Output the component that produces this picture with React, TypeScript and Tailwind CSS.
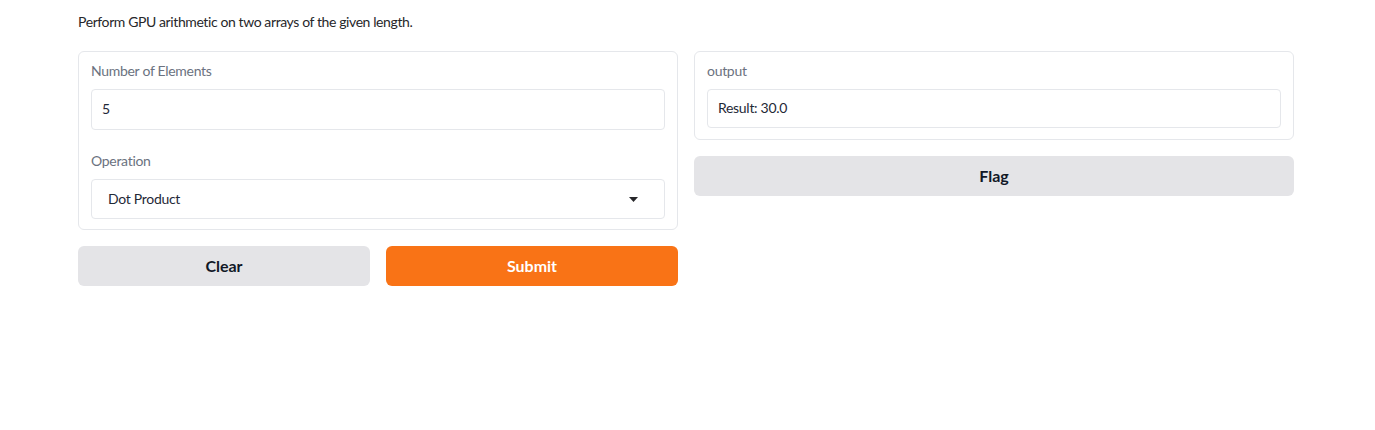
import React from 'react';

const font = { fontFamily: 'Lato, "Noto Sans", sans-serif' };

const Label = ({ children }: { children: React.ReactNode }) => (
  <div className="mb-2 h-[17px] text-[14px] leading-[14px] tracking-[-0.3px] text-[#6b7280]">{children}</div>
);

export default function App() {
  return (
    <div style={font} className="min-h-[430px] w-full bg-white text-[#1f2937]">
      <div className="mx-[78px] pt-[14px]">
        <p className="mb-[21px] text-[14px] leading-[16px] tracking-[-0.4px] text-[#27272a]">
          Perform GPU arithmetic on two arrays of the given length.
        </p>
        <div className="flex gap-4">
          {/* inputs */}
          <div className="flex w-[600px] flex-col gap-4">
            <div className="rounded-md border border-[#e5e7eb] px-3 pb-[10px] pt-3">
              <Label>Number of Elements</Label>
              <div className="flex h-[41px] items-center rounded border border-[#e5e7eb] px-[10px] pb-[3px] text-[14px] tracking-[-0.3px]">
                5
              </div>
              <div className="h-[24px]" />
              <Label>Operation</Label>
              <div className="flex h-[40px] items-center justify-between rounded border border-[#e5e7eb] pl-4 pr-[26px] text-[14px] tracking-[-0.3px]">
                <span className="pb-[2px]">Dot Product</span>
                <svg width="9" height="5" viewBox="0 0 9 5">
                  <path d="M0 0h9L4.5 5z" fill="#27272a" />
                </svg>
              </div>
            </div>
            <div className="flex gap-4">
              <button className="h-10 flex-1 rounded-md bg-[#e4e4e7] text-[16px] font-bold text-[#111827]">
                Clear
              </button>
              <button className="h-10 flex-1 rounded-md bg-[#f97316] text-[16px] font-bold text-white">
                Submit
              </button>
            </div>
          </div>
          {/* output */}
          <div className="flex w-[600px] flex-col gap-4">
            <div className="rounded-md border border-[#e5e7eb] px-3 pb-[11px] pt-3">
              <Label>output</Label>
              <div className="flex h-[39px] items-center rounded border border-[#e5e7eb] px-[10px] pb-[3px] text-[14px] tracking-[-0.3px]">
                Result: 30.0
              </div>
            </div>
            <button className="h-10 w-full rounded-md bg-[#e4e4e7] text-[16px] font-bold text-[#111827]">
              Flag
            </button>
          </div>
        </div>
      </div>
    </div>
  );
}
